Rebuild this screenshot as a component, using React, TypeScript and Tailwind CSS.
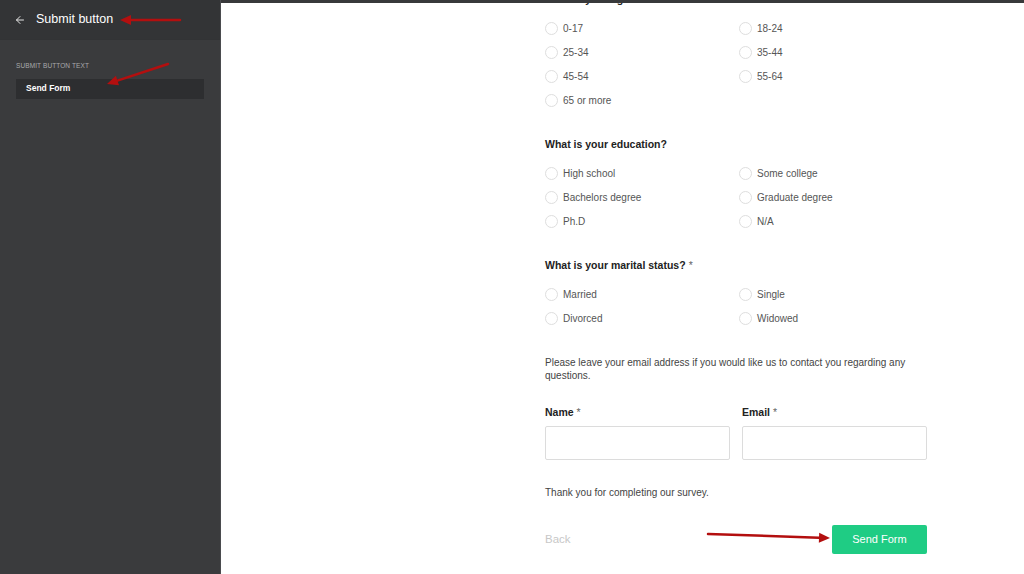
import React from 'react';
import { ArrowLeft } from 'lucide-react';

const font = { fontFamily: '"Liberation Sans", Arial, sans-serif' };

const AGE = ['0-17', '18-24', '25-34', '35-44', '45-54', '55-64', '65 or more'];
const EDU = ['High school', 'Some college', 'Bachelors degree', 'Graduate degree', 'Ph.D', 'N/A'];
const MARITAL = ['Married', 'Single', 'Divorced', 'Widowed'];

const Arrow: React.FC<{ x1: number; y1: number; x2: number; y2: number }> = ({ x1, y1, x2, y2 }) => {
  const a = Math.atan2(y2 - y1, x2 - x1);
  const len = 11;
  const w = 5;
  const bx = x2 - Math.cos(a) * len;
  const by = y2 - Math.sin(a) * len;
  const px = -Math.sin(a) * w;
  const py = Math.cos(a) * w;
  return (
    <>
      <line x1={x1} y1={y1} x2={bx} y2={by} stroke="#b30f0f" strokeWidth={2.5} strokeLinecap="round" />
      <polygon points={`${x2},${y2} ${bx + px},${by + py} ${bx - px},${by - py}`} fill="#b30f0f" />
    </>
  );
};

const Radio: React.FC<{ label: string }> = ({ label }) => (
  <div className="flex h-[24px] items-center gap-[5px]">
    <span className="h-[13px] w-[13px] rounded-full border border-[#dedede] bg-white" />
    <span className="text-[10px] text-[#555]">{label}</span>
  </div>
);

const Question: React.FC<{ title: string; required?: boolean; options: string[]; className?: string }> = ({
  title,
  required,
  options,
  className = '',
}) => (
  <div className={className}>
    <div className="mb-[9px] flex h-[14px] items-center text-[10.5px] font-bold text-[#222]">
      {title}
      {required && <span className="ml-[3px] font-normal text-[#666]">*</span>}
    </div>
    <div className="grid grid-cols-[194px_1fr]">
      {options.map((o) => (
        <Radio key={o} label={o} />
      ))}
    </div>
  </div>
);

export default function App() {
  return (
    <div className="relative flex h-[574px] w-[1024px] overflow-hidden" style={font}>
      {/* sidebar */}
      <aside className="flex w-[221px] flex-col border-r border-[#4a4b4e] bg-[#3a3b3d]">
        <div className="flex h-[40px] items-center gap-[10px] border-b border-[#323335] bg-[#333436] pl-[14px]">
          <ArrowLeft size={12} strokeWidth={2} className="text-[#e5e5e5]" />
          <span className="text-[12.5px] text-white">Submit button</span>
        </div>
        <div className="px-[16px] pt-[21px]">
          <div className="text-[6.5px] uppercase tracking-[0.1px] text-[#a9aaac]">Submit button text</div>
          <div className="mt-[8px] flex h-[20px] items-center bg-[#2d2e30] pl-[10px] text-[8.5px] font-bold text-white">
            Send Form
          </div>
        </div>
      </aside>

      {/* form */}
      <main className="flex flex-1 flex-col overflow-hidden border-t-[3px] border-[#38393b] bg-white">
        <div className="ml-[324px] mt-[-10px] w-[382px]">
          <Question title="What is your age?" options={AGE} />
          <Question title="What is your education?" options={EDU} className="mt-[26px]" />
          <Question title="What is your marital status?" required options={MARITAL} className="mt-[26px]" />

          <p className="mt-[26px] text-[10px] leading-[13px] text-[#444]">
            Please leave your email address if you would like us to contact you regarding any questions.
          </p>

          <div className="mt-[24px] grid grid-cols-2 gap-[12px]">
            {['Name', 'Email'].map((f) => (
              <div key={f}>
                <div className="flex h-[14px] items-center text-[10.5px] font-bold text-[#222]">
                  {f}
                  <span className="ml-[3px] font-normal text-[#666]">*</span>
                </div>
                <div className="mt-[6px] h-[34px] rounded-[2px] border border-[#dcdcdc] bg-white" />
              </div>
            ))}
          </div>

          <p className="mt-[25px] flex h-[14px] items-center text-[10px] text-[#444]">
            Thank you for completing our survey.
          </p>

          <div className="mt-[26px] flex items-center justify-between">
            <span className="text-[11.5px] text-[#c8c8c8]">Back</span>
            <button className="h-[29px] w-[95px] rounded-[2px] bg-[#1fcc84] text-[11px] text-white">Send Form</button>
          </div>
        </div>
      </main>

      {/* annotation arrows */}
      <svg className="pointer-events-none absolute inset-0" width={1024} height={574}>
        <Arrow x1={180} y1={20} x2={120} y2={20} />
        <Arrow x1={168} y1={64} x2={107} y2={84} />
        <Arrow x1={708} y1={534} x2={830} y2={538} />
      </svg>
    </div>
  );
}
